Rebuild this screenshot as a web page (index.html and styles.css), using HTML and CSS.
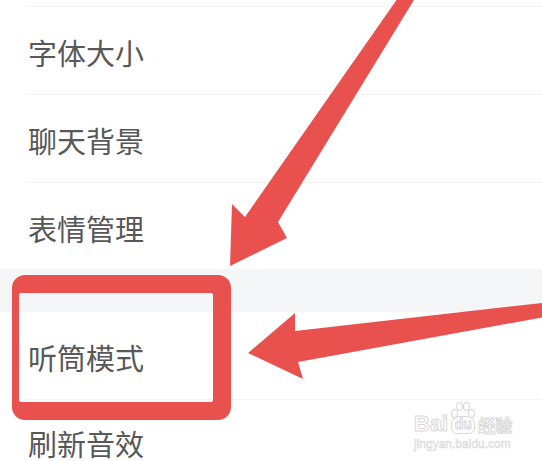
FILE: index.html
```html
<!DOCTYPE html>
<html lang="zh-CN">
<head>
  <meta charset="UTF-8">
  <meta name="viewport" content="width=device-width, initial-scale=1.0">
  <title>设置</title>
  <link rel="stylesheet" href="styles.css">
</head>
<body>

  <div class="settings">
    <div class="row row-top"></div>
    <div class="row">字体大小</div>
    <div class="row">聊天背景</div>
    <div class="row row-last">表情管理</div>
    <div class="gap"></div>
    <div class="row">听筒模式</div>
    <div class="row row-end">刷新音效</div>
  </div>

  <!-- 标注：箭头和红框 -->
  <svg class="marks" width="542" height="461" viewBox="0 0 542 461">
    <path class="mark" fill-rule="evenodd"
      d="M25 275 H218 A13 13 0 0 1 231 288 V407 A13 13 0 0 1 218 420 H25 A13 13 0 0 1 12 407 V288 A13 13 0 0 1 25 275 Z
         M21 293 H211 A2 2 0 0 1 213 295 V400 A2 2 0 0 1 211 402 H21 A2 2 0 0 1 19 400 V295 A2 2 0 0 1 21 293 Z" />
    <polygon class="mark" points="400,-5 417,-5 278,222 287,238 230,266 232,204 245,217" />
    <polygon class="mark" points="550,302 295,331 295,313 248,353 303,379 298,362 550,316" />
  </svg>

  <div class="watermark">
    <div class="wm-logo">
      <span class="wm-bai">Bai</span>
      <span class="wm-paw">
        <i class="toe t1"></i><i class="toe t2"></i><i class="toe t3"></i><i class="toe t4"></i>
        <span class="wm-du">du</span>
      </span>
      <span class="wm-jy">经验</span>
    </div>
    <div class="wm-url">jingyan.baidu.com</div>
  </div>

</body>
</html>
```

FILE: styles.css
```css
body {
  margin: 0;
  background: #fff;
  font-family: "Noto Sans CJK SC", "Noto Sans", sans-serif;
  width: 542px;
  height: 461px;
  overflow: hidden;
  position: relative;
}

.settings {
  display: flex;
  flex-direction: column;
}

.row {
  height: 88px;
  margin-left: 25px;
  padding-left: 3px;
  padding-top: 4px;
  box-sizing: border-box;
  display: flex;
  align-items: center;
  font-size: 29px;
  line-height: 29px;
  color: #585858;
  border-bottom: 1px solid #f1f2f4;
  flex-shrink: 0;
}

.row-top {
  height: 7px;
  padding-top: 0;
}

.row-last {
  height: 86px;
  border-bottom: none;
}

.row-end {
  height: 61px;
  padding-top: 26px;
  border-bottom: none;
}

.gap {
  height: 43px;
  background: #f5f6f8;
  flex-shrink: 0;
}

.marks {
  position: absolute;
  left: 0;
  top: 0;
}

.mark {
  fill: #e9514f;
}

/* 百度经验水印 */
.watermark {
  position: absolute;
  left: 414px;
  top: 401px;
  color: #fff;
  -webkit-text-stroke: 1px #d8d8d8;
}

.wm-logo {
  display: flex;
  align-items: flex-end;
  height: 33px;
}

.wm-bai {
  font-family: "Liberation Sans", sans-serif;
  font-weight: bold;
  font-size: 22px;
  line-height: 20px;
}

.wm-paw {
  position: relative;
  width: 26px;
  height: 33px;
  margin-left: 1px;
}

.toe {
  position: absolute;
  width: 5px;
  height: 7px;
  border: 1px solid #d8d8d8;
  border-radius: 50%;
  background: #fff;
}

.t1 { left: 2px; top: 8px; }
.t2 { left: 7px; top: 1px; }
.t3 { left: 14px; top: 1px; }
.t4 { left: 19px; top: 8px; }

.wm-du {
  position: absolute;
  left: 2px;
  bottom: 0;
  width: 22px;
  height: 16px;
  border: 1px solid #d8d8d8;
  border-radius: 8px 8px 6px 6px;
  font-family: "Liberation Sans", sans-serif;
  font-weight: bold;
  font-size: 14px;
  line-height: 15px;
  text-align: center;
}

.wm-jy {
  font-size: 17px;
  line-height: 18px;
  margin-left: 3px;
  font-weight: bold;
}

.wm-url {
  font-family: "Liberation Sans", sans-serif;
  font-size: 12px;
  line-height: 14px;
  margin-top: 3px;
  -webkit-text-stroke: 0.6px #d8d8d8;
}
```
